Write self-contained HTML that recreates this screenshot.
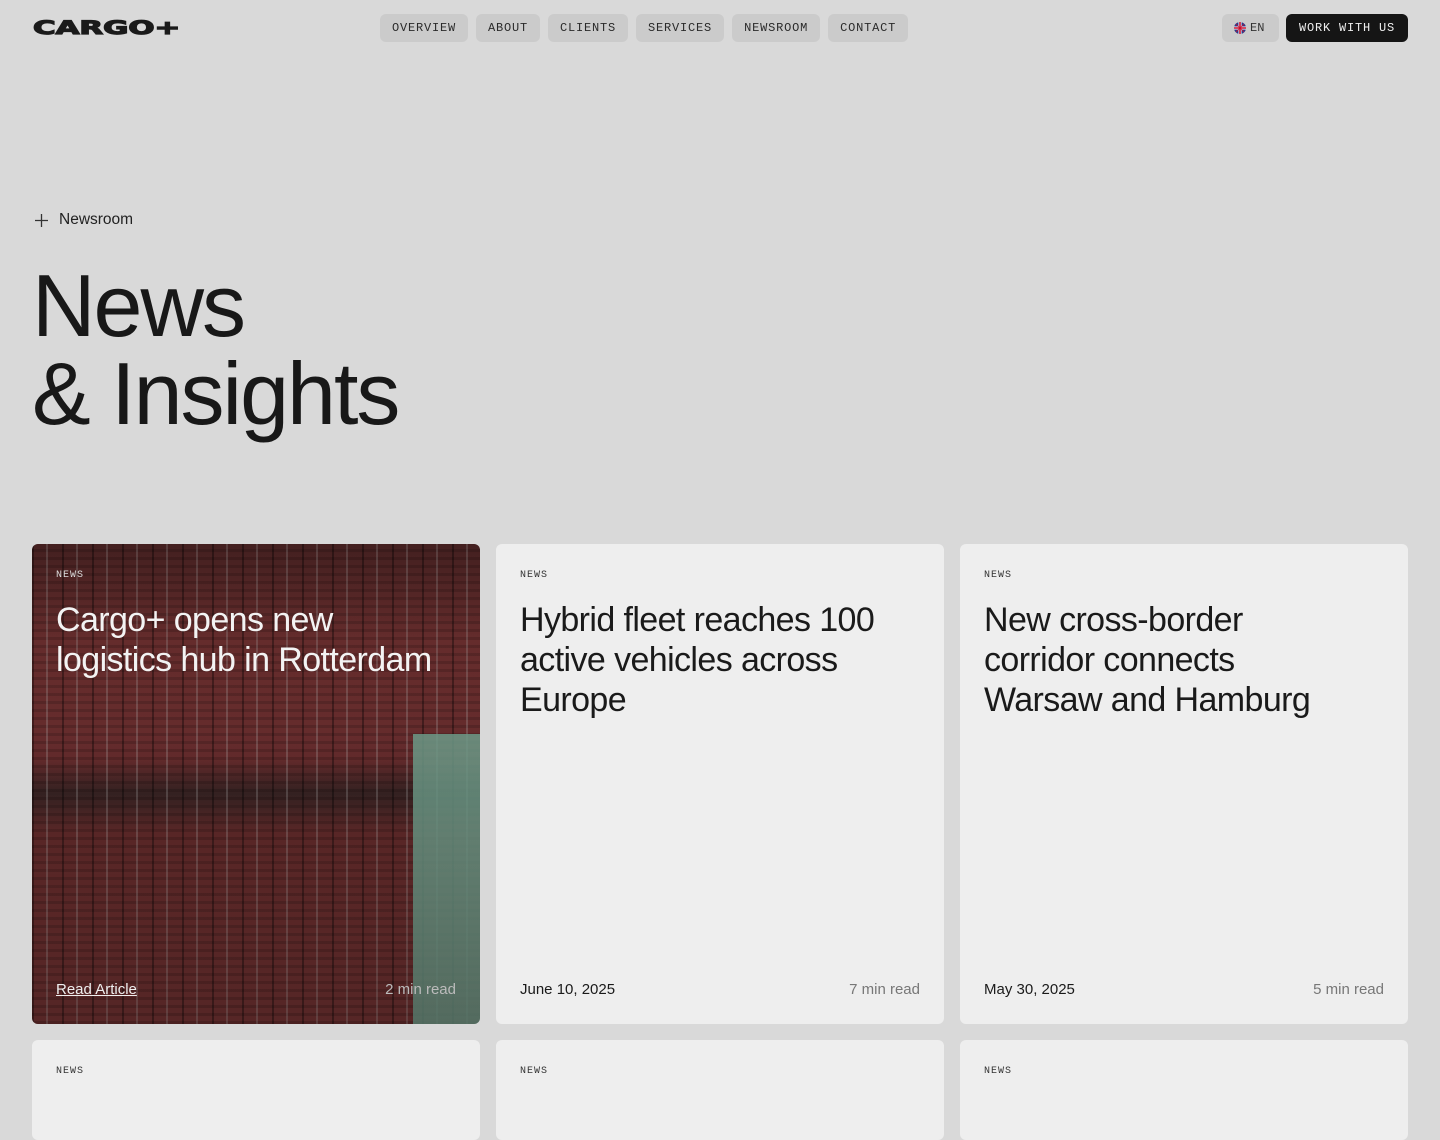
<!DOCTYPE html>
<html><head><meta charset="utf-8"><style>
*{margin:0;padding:0;box-sizing:border-box}
body{width:1440px;height:1080px;overflow:hidden;background:#d9d9d9;font-family:"Liberation Sans",sans-serif;color:#161616;position:relative}
.logo{position:absolute;left:33px;top:15px;font-family:"DejaVu Sans",sans-serif;font-weight:bold;font-size:19px;letter-spacing:0;transform:scaleX(1.62);transform-origin:left top;line-height:26px;color:#1a1a1a;-webkit-text-stroke:1.2px #1a1a1a}
.nav{position:absolute;top:14px;left:380px;display:flex;gap:8px}
.pill{height:28px;padding:0 12px;border-radius:6px;background:#cbcbcb;font-family:"Liberation Mono",monospace;font-size:12px;letter-spacing:.8px;line-height:28px;color:#2a2a2a}
.lang{position:absolute;left:1222px;top:14px;width:57px;height:28px;border-radius:6px;background:#cbcbcb;font-family:"Liberation Mono",monospace;font-size:12px;line-height:28px;color:#333;padding-left:12px;display:flex;align-items:center;gap:4px}
.work{position:absolute;left:1286px;top:14px;width:122px;height:28px;border-radius:6px;background:#151515;color:#eee;font-family:"Liberation Mono",monospace;font-size:12px;letter-spacing:.8px;line-height:28px;text-align:center}
.crumb{position:absolute;left:34px;top:211px;font-size:15.5px;color:#222;display:flex;align-items:center;gap:10px}
h1{position:absolute;left:32px;top:262px;font-weight:400;font-size:88px;line-height:88px;letter-spacing:-2px;color:#181818}
.card{position:absolute;width:448px;border-radius:6px;background:#eeeeee;overflow:hidden}
.tag{position:absolute;left:24px;top:26px;font-family:"Liberation Mono",monospace;font-size:10px;letter-spacing:1px;color:#333}
.title{position:absolute;left:24px;top:56px;right:10px;font-size:34px;line-height:40px;letter-spacing:-0.6px;color:#1a1a1a;white-space:nowrap}
.foot{position:absolute;left:24px;right:24px;bottom:26px;display:flex;justify-content:space-between;font-size:15px}
.foot .d{color:#1a1a1a}.foot .r{color:#777}
.img{background:
 linear-gradient(90deg,transparent 0 85%,rgba(120,170,150,.85) 85% 100%) 0 190px/100% 100% no-repeat,
 repeating-linear-gradient(90deg,rgba(0,0,0,.35) 0 2px,transparent 2px 14px,rgba(200,200,200,.25) 14px 16px,transparent 16px 30px),
 repeating-linear-gradient(0deg,rgba(0,0,0,.15) 0 3px,transparent 3px 8px),
 linear-gradient(180deg,#5a2a2a 0,#7a3535 20%,#6e2f30 45%,#3c2626 52%,#6a2e2e 60%,#7a3636 100%)}
.img::after{content:"";position:absolute;inset:0;background:linear-gradient(180deg,rgba(0,0,0,.25),rgba(0,0,0,.1) 40%,rgba(0,0,0,.3))}
.img>*{z-index:1}
</style></head><body>
<div class="logo">CARGO+</div>
<div class="nav"><div class="pill">OVERVIEW</div><div class="pill">ABOUT</div><div class="pill">CLIENTS</div><div class="pill">SERVICES</div><div class="pill">NEWSROOM</div><div class="pill">CONTACT</div></div>
<div class="lang"><svg width="12" height="12" viewBox="0 0 12 12"><circle cx="6" cy="6" r="6" fill="#2a3a8c"/><path d="M0 6H12M6 0V12" stroke="#fff" stroke-width="3"/><path d="M0 6H12M6 0V12" stroke="#c8102e" stroke-width="1.6"/><path d="M2 2L10 10M10 2L2 10" stroke="#c8102e" stroke-width=".8"/></svg>EN</div>
<div class="work">WORK WITH US</div>
<div class="crumb"><svg width="15" height="15"><path d="M7.5 1V14M1 7.5H14" stroke="#333" stroke-width="1.3"/></svg>Newsroom</div>
<h1>News<br>&amp; Insights</h1>
<div class="card img" style="left:32px;top:544px;height:480px">
<div class="tag" style="color:#ddd">NEWS</div>
<div class="title" style="color:#f3f3f3">Cargo+ opens new<br>logistics hub in Rotterdam</div>
<div class="foot"><span style="color:#eee;text-decoration:underline">Read Article</span><span style="color:#bbb">2 min read</span></div>
</div>
<div class="card" style="left:496px;top:544px;height:480px"><div class="tag">NEWS</div><div class="title">Hybrid fleet reaches 100<br>active vehicles across<br>Europe</div><div class="foot"><span class="d">June 10, 2025</span><span class="r">7 min read</span></div></div>
<div class="card" style="left:960px;top:544px;height:480px"><div class="tag">NEWS</div><div class="title">New cross-border<br>corridor connects<br>Warsaw and Hamburg</div><div class="foot"><span class="d">May 30, 2025</span><span class="r">5 min read</span></div></div>
<div class="card" style="left:32px;top:1040px;height:100px"><div class="tag">NEWS</div></div>
<div class="card" style="left:496px;top:1040px;height:100px"><div class="tag">NEWS</div></div>
<div class="card" style="left:960px;top:1040px;height:100px"><div class="tag">NEWS</div></div>
</body></html>
